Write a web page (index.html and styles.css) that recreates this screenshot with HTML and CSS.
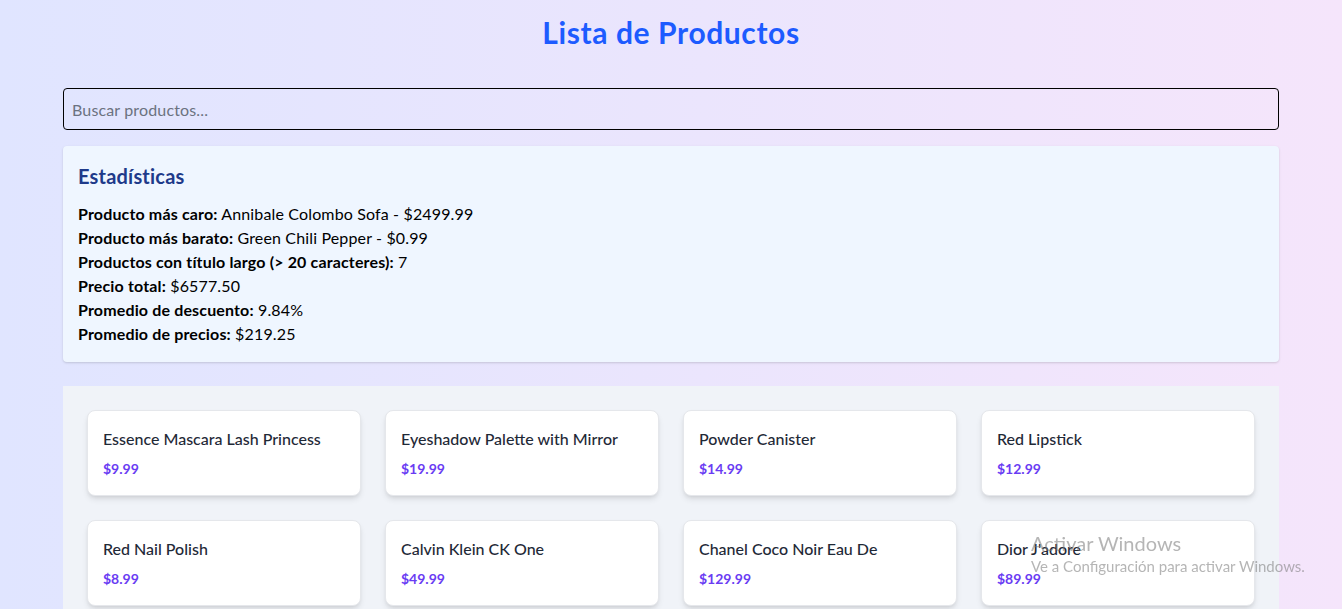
FILE: index.html
```html
<!DOCTYPE html>
<html lang="es">
<head>
<meta charset="utf-8">
<title>Lista de Productos</title>
<link rel="stylesheet" href="styles.css">
</head>
<body>
<div class="page">
  <h1 class="title">Lista de Productos</h1>
  <input class="search" type="text" placeholder="Buscar productos...">
  <section class="stats">
    <h2 class="stats-title">Estadísticas</h2>
    <p><b>Producto más caro:</b> Annibale Colombo Sofa - $2499.99</p>
    <p><b>Producto más barato:</b> Green Chili Pepper - $0.99</p>
    <p><b>Productos con título largo (&gt; 20 caracteres):</b> 7</p>
    <p><b>Precio total:</b> $6577.50</p>
    <p><b>Promedio de descuento:</b> 9.84%</p>
    <p><b>Promedio de precios:</b> $219.25</p>
  </section>
  <section class="products">
    <div class="card"><h3>Essence Mascara Lash Princess</h3><p class="price">$9.99</p></div>
    <div class="card"><h3>Eyeshadow Palette with Mirror</h3><p class="price">$19.99</p></div>
    <div class="card"><h3>Powder Canister</h3><p class="price">$14.99</p></div>
    <div class="card"><h3>Red Lipstick</h3><p class="price">$12.99</p></div>
    <div class="card"><h3>Red Nail Polish</h3><p class="price">$8.99</p></div>
    <div class="card"><h3>Calvin Klein CK One</h3><p class="price">$49.99</p></div>
    <div class="card"><h3>Chanel Coco Noir Eau De</h3><p class="price">$129.99</p></div>
    <div class="card"><h3>Dior J'adore</h3><p class="price">$89.99</p></div>
    <div class="card"><h3>Dolce Shine Eau de</h3><p class="price">$69.99</p></div>
    <div class="card"><h3>Gucci Bloom Eau de</h3><p class="price">$79.99</p></div>
    <div class="card"><h3>Annibale Colombo Bed</h3><p class="price">$1899.99</p></div>
    <div class="card"><h3>Annibale Colombo Sofa</h3><p class="price">$2499.99</p></div>
  </section>
</div>
<div class="watermark">
  <div class="wm-big">Activar Windows</div>
  <div class="wm-small">Ve a Configuración para activar Windows.</div>
</div>
</body>
</html>
```
FILE: styles.css
```css
* { box-sizing: border-box; }
html, body { margin: 0; }
body {
  font-family: "Lato", "Open Sans", sans-serif;
  background: linear-gradient(to right, #e0e5ff, #f5e5fb);
  min-height: 100vh;
  color: #000;
}
.page {
  max-width: 1280px;
  margin: 0 auto;
  padding: 14px 32px 32px;
}
.title {
  margin: 0 0 38px;
  text-align: center;
  font-size: 30px;
  line-height: 36px;
  font-weight: 700;
  letter-spacing: 0.6px;
  color: #1d5bff;
}
.search {
  display: block;
  width: 100%;
  height: 42px;
  padding: 8px;
  border: 1px solid #000;
  border-radius: 4px;
  background: transparent;
  font: inherit;
  font-size: 16px;
  letter-spacing: 0.15px;
  margin-bottom: 16px;
}
.search::placeholder { color: #6b7280; }
.stats {
  background: #eff6ff;
  border-radius: 4px;
  padding: 16px 16px 16px 15px;
  box-shadow: 0 1px 3px rgba(0,0,0,0.1), 0 1px 2px rgba(0,0,0,0.06);
  margin-bottom: 24px;
}
.stats-title {
  margin: 0 0 12px;
  font-size: 20px;
  line-height: 28px;
  font-weight: 700;
  letter-spacing: 0.2px;
  color: #1e3a8a;
}
.stats p {
  margin: 0;
  font-size: 16px;
  line-height: 24px;
  letter-spacing: 0.15px;
}
.products {
  background: #f0f3f8;
  padding: 24px;
  display: grid;
  grid-template-columns: repeat(4, 1fr);
  gap: 24px;
}
.card {
  background: #fff;
  border-radius: 8px;
  padding: 16px 15px;
  border: 1px solid #e5e7eb;
  box-shadow: 0 4px 6px -1px rgba(0,0,0,0.1), 0 2px 4px -2px rgba(0,0,0,0.1);
}
.card h3 {
  margin: 0 0 8px;
  font-size: 16px;
  line-height: 24px;
  font-weight: 500;
  color: #1f2937;
  white-space: nowrap;
  overflow: hidden;
}
.price {
  margin: 0;
  font-size: 14px;
  line-height: 20px;
  font-weight: 700;
  color: #6a3cf3;
}
.watermark {
  position: fixed;
  left: 1031px;
  top: 530px;
  color: rgba(120,120,120,0.55);
  pointer-events: none;
}
.wm-big { font-size: 20px; line-height: 26px; }
.wm-small { font-size: 15px; line-height: 20px; }
```
